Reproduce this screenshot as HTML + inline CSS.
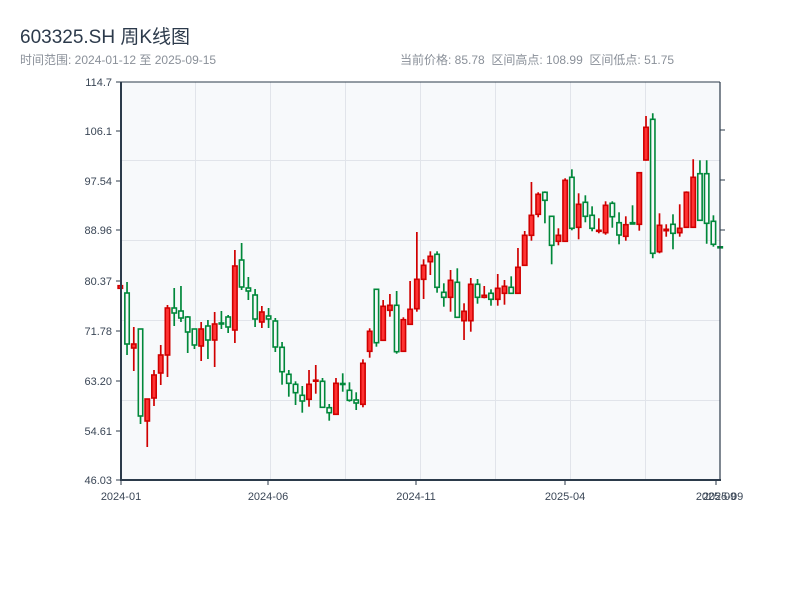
<!DOCTYPE html>
<html><head><meta charset="utf-8"><style>
html,body{margin:0;padding:0;background:#fff;width:800px;height:600px;overflow:hidden}
body{font-family:"Liberation Sans","Noto Sans CJK SC",sans-serif;position:relative}
.t{position:absolute;white-space:nowrap}
</style></head><body>
<div class="t" style="left:20px;top:22px;font-size:19px;color:#2c3a4b">603325.SH 周K线图</div>
<div class="t" style="left:20px;top:51px;font-size:12px;color:#8a9099">时间范围: 2024-01-12 至 2025-09-15</div>
<div class="t" style="left:400px;top:51px;font-size:12px;color:#8a9099">当前价格: 85.78&nbsp;&nbsp;区间高点: 108.99&nbsp;&nbsp;区间低点: 51.75</div>
<svg id="s" width="800" height="600" style="position:absolute;left:0;top:0" font-family="Liberation Sans, sans-serif">
<rect x="121" y="82" width="599" height="398" fill="#f7f9fb"/>
<g stroke="#e1e4ea" stroke-width="1">
<line x1="121" x2="720" y1="160.5" y2="160.5"/><line x1="121" x2="720" y1="240.5" y2="240.5"/>
<line x1="121" x2="720" y1="320.5" y2="320.5"/><line x1="121" x2="720" y1="400.5" y2="400.5"/>
<line x1="195.5" x2="195.5" y1="82" y2="480"/><line x1="270.5" x2="270.5" y1="82" y2="480"/>
<line x1="345.5" x2="345.5" y1="82" y2="480"/><line x1="420.5" x2="420.5" y1="82" y2="480"/>
<line x1="495.5" x2="495.5" y1="82" y2="480"/><line x1="570.5" x2="570.5" y1="82" y2="480"/>
<line x1="645.5" x2="645.5" y1="82" y2="480"/>
</g>
<g id="c"></g>
<g stroke="#2b3a4a" fill="none">
<line x1="121" x2="720" y1="82" y2="82" stroke-width="1"/>
<line x1="720" x2="720" y1="82" y2="480" stroke-width="1.2"/>
<line x1="121" x2="121" y1="82" y2="481" stroke-width="2"/>
<line x1="120" x2="721" y1="480" y2="480" stroke-width="2"/>
<g stroke-width="1">
<line x1="116" x2="121" y1="82" y2="82"/><line x1="116" x2="121" y1="131" y2="131"/><line x1="116" x2="121" y1="181" y2="181"/>
<line x1="116" x2="121" y1="230" y2="230"/><line x1="116" x2="121" y1="281" y2="281"/><line x1="116" x2="121" y1="331" y2="331"/>
<line x1="116" x2="121" y1="381" y2="381"/><line x1="116" x2="121" y1="431" y2="431"/><line x1="116" x2="121" y1="480" y2="480"/>
<line x1="720" x2="725" y1="130" y2="130"/><line x1="720" x2="725" y1="180" y2="180"/><line x1="720" x2="725" y1="230" y2="230"/>
<line x1="121" x2="121" y1="480" y2="485"/><line x1="268" x2="268" y1="480" y2="485"/><line x1="416" x2="416" y1="480" y2="485"/>
<line x1="565" x2="565" y1="480" y2="485"/><line x1="716" x2="716" y1="480" y2="485"/>
</g></g>
<g font-size="11" fill="#3a4656" text-anchor="end">
<text x="112" y="86">114.7</text><text x="112" y="135">106.1</text><text x="112" y="185">97.54</text>
<text x="112" y="234">88.96</text><text x="112" y="285">80.37</text><text x="112" y="335">71.78</text>
<text x="112" y="385">63.20</text><text x="112" y="435">54.61</text><text x="112" y="484">46.03</text>
</g>
<g font-size="11" fill="#3a4656" text-anchor="middle">
<text x="121" y="500">2024-01</text><text x="268" y="500">2024-06</text><text x="416" y="500">2024-11</text>
<text x="565" y="500">2025-04</text><text x="716" y="500">2025-09</text><text x="723" y="500">2025-09</text>
</g>
</svg>
<script>
var d=[
[1,285.7,288.3,285.7,288.3],[0,293,344,282,355],[1,344,348,327,371],[0,329,416,329,424],[1,399,421,399,447],
[1,375,398,370,406],[1,355,373,345,385],[1,308,355,305,377],[0,308,313,288,326],[0,311,318,286,322],
[0,317,332,316,353],[0,329,345,329,349],[1,329,346,322,361],[0,326,340,320,359],[1,324,340,312,367],
[0,323,324,311,329],[0,317,327,315,333],[1,266,330,250,343],[0,260,287,243,290],[0,288,291,277,300],
[0,295,319,289,327],[1,312,322,306,328],[0,316,319,308,328],[0,321,347,318,352],[0,347.3,371.7,342,384.7],
[0,374.3,383.3,370,396.7],[0,384.3,392.7,381.3,405],[0,395.3,401,386,412.7],[1,384.3,399.3,370,406.7],[1,380.2,381.2,365,393.7],
[0,381.3,407.3,378,408],[0,407.7,412.7,404,420.7],[1,383.3,414.3,378,414.3],[0,383.5,384.5,373.3,391.7],[0,390.3,400.3,382.3,401.7],
[0,400,403,392.3,410],[1,363.3,404.3,359.3,407.3],[1,331.3,351.3,328.3,357.7],[0,289.3,342.7,289.3,346.7],[1,306.3,340.3,300,340.3],
[1,305.3,310.3,294,316.7],[0,305.3,351.7,291,353.7],[1,319.7,351.3,317.3,351.3],[1,309.3,324.3,281,324.3],[1,279.3,308.7,232,311.7],
[1,265.3,279.3,259.3,299],[1,256.3,261.7,251.3,275],[0,254.3,287.3,251.3,292.7],[0,292.3,297.3,283.3,306.7],[1,280.3,297.3,270,311.7],
[0,282.3,317.3,268.3,317.3],[1,311.3,320.7,303.3,340],[1,284.3,320.7,278,331.7],[0,284.3,297.3,279,303.7],[1,295.3,297.3,286,298.3],
[0,293.3,299.3,289.3,305.7],[1,288.3,299.3,274,305.7],[1,286.3,293.3,280,304.7],[0,287.3,293.3,276.3,293.3],[1,267.3,293.3,248,293.3],
[1,235.3,265.3,231,265.3],[1,215.3,235.3,182,240.7],[1,194.3,214.3,192.3,217.3],[0,192.3,200.3,191.3,223.3],[0,216.3,245.3,216.3,264.3],
[1,235.3,241.3,228.3,245.3],[1,180.3,241.3,178.3,241.3],[0,177.3,228.3,169.3,230.3],[1,204.3,227.3,193.3,239.3],[0,202.3,216.3,195.3,222.3],
[0,215.3,228.3,206.3,231.3],[1,230.3,231.3,218.3,233.3],[1,205.3,232.7,201.3,234.7],[0,203.3,216.7,201.3,227.7],[0,222.7,235,212.3,244.3],
[1,224.7,236.3,216.3,240.7],[0,222.7,224,205.3,224],[1,172.7,224.3,172.7,230.7],[1,127.3,160,116,160.7],[0,119.3,253.3,113.3,258.3],
[1,225.3,251.7,213.3,253.3],[1,229.3,230.7,224.3,236.7],[0,224.3,233.3,214.3,249.3],[1,228.3,232.7,204.3,236.7],[1,192.3,227.3,191.3,227.3],
[1,177.3,227.3,159.3,227.3],[0,173.7,220.3,160.3,220.3],[0,173.7,223.3,160.3,243.7],[0,221.3,244.3,215.3,246.7],[0,246.8,247.8,246.8,247.8]
];
var s="";
for(var i=0;i<d.length;i++){var c=d[i],x=120.3+6.74*i,up=c[0];
var st=up?"#d00000":"#00883a",fl=up?"#ff3333":"#f7f9fb";
s+='<line x1="'+x+'" x2="'+x+'" y1="'+c[3]+'" y2="'+c[4]+'" stroke="'+st+'" stroke-width="1.7"/>';
var h=Math.max(c[2]-c[1],1);
s+='<rect x="'+(x-2.2)+'" y="'+c[1]+'" width="4.4" height="'+h+'" fill="'+fl+'" stroke="'+st+'" stroke-width="1.6"/>';}
document.getElementById("c").innerHTML=s;
</script>
</body></html>
